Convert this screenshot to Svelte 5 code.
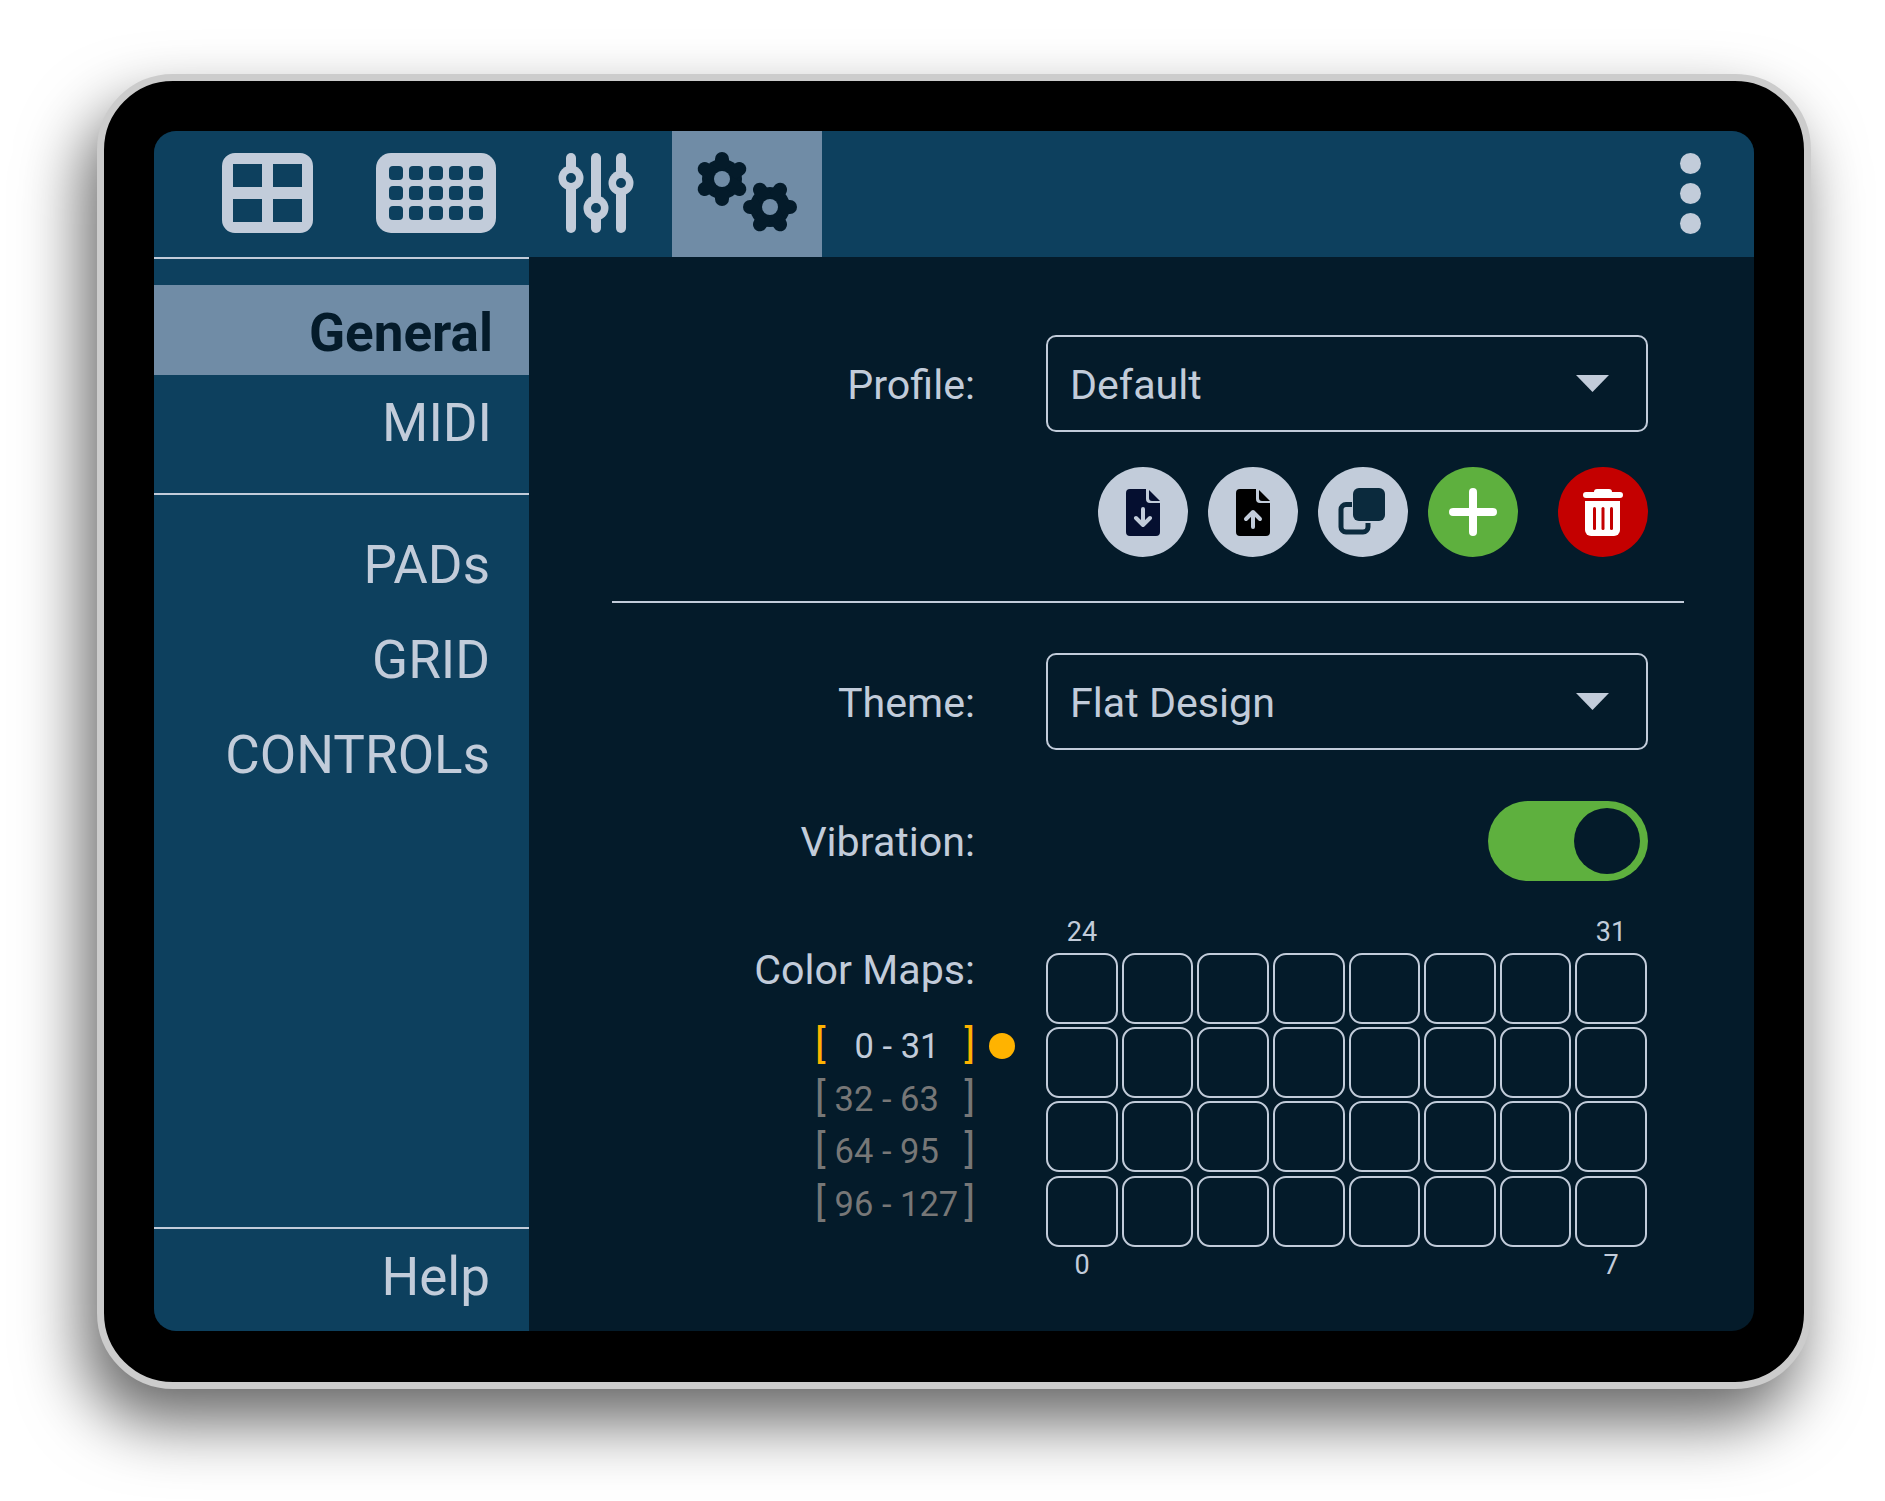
<script>
  const menuTop = ['PADs', 'GRID', 'CONTROLs'];
  const ranges = [
    { label: '0 - 31', active: true },
    { label: '32 - 63', active: false },
    { label: '64 - 95', active: false },
    { label: '96 - 127', active: false }
  ];
  const cells = Array.from({ length: 32 }, (_, i) => i);
  const holes = Array.from({ length: 15 }, (_, i) => ({ x: 13 + (i % 5) * 20, y: 13 + Math.floor(i / 5) * 20 }));
  const sliders = [
    { x: 13, y: 25 },
    { x: 38, y: 55 },
    { x: 63, y: 30 }
  ];
  const angles = [0, 60, 120];
</script>

<div class="page">
  <div class="device">
    <div class="screen">
      <header class="topbar">
        <button class="tab tab-grid" aria-label="Pads">
          <svg width="91" height="80" viewBox="0 0 91 80">
            <path fill-rule="evenodd" d="M13 0H78a13 13 0 0 1 13 13V67a13 13 0 0 1-13 13H13A13 13 0 0 1 0 67V13A13 13 0 0 1 13 0ZM11 11V34H40V11ZM51 11V34H80V11ZM11 46V69H40V46ZM51 46V69H80V46Z" />
          </svg>
        </button>
        <button class="tab tab-keys" aria-label="Grid">
          <svg width="120" height="80" viewBox="0 0 120 80">
            <rect width="120" height="80" rx="15" />
            {#each holes as h}
              <rect class="hole" x={h.x} y={h.y} width="14" height="14" rx="4" />
            {/each}
          </svg>
        </button>
        <button class="tab tab-sliders" aria-label="Controls">
          <svg width="76" height="80" viewBox="0 0 76 80">
            {#each sliders as s}
              <rect x={s.x - 5} y="0" width="10" height="80" rx="5" />
              <circle cx={s.x} cy={s.y} r="12.5" />
              <circle class="hole" cx={s.x} cy={s.y} r="5" />
            {/each}
          </svg>
        </button>
        <button class="tab tab-gears" aria-label="Settings">
          <svg width="104" height="84" viewBox="0 0 104 84">
            <g transform="translate(27 28)">
              <circle r="20" />
              {#each angles as a}
                <line x1="0" y1="-20" x2="0" y2="20" transform="rotate({a})" />
              {/each}
              <circle class="gear-hole" r="8" />
            </g>
            <g transform="translate(75 56)">
              <circle r="20" />
              {#each angles as a}
                <line x1="0" y1="-20" x2="0" y2="20" transform="rotate({a + 30})" />
              {/each}
              <circle class="gear-hole" r="8" />
            </g>
          </svg>
        </button>
        <div class="dots"><i></i><i></i><i></i></div>
      </header>

      <div class="body">
        <nav class="sidebar">
          <div class="side-item selected">General</div>
          <div class="side-item midi">MIDI</div>
          <div class="side-line"></div>
          {#each menuTop as item}
            <div class="side-item big">{item}</div>
          {/each}
          <div class="side-item help">Help</div>
        </nav>

        <main class="content">
          <div class="row first">
            <span class="label">Profile:</span>
            <div class="select">
              <span>Default</span>
              <svg width="33" height="17" viewBox="0 0 33 17"><path d="M0 0H33L16.5 17Z" /></svg>
            </div>
          </div>

          <div class="actions">
            <button class="round" aria-label="Import">
              <svg width="34" height="47" viewBox="0 0 34 47">
                <path class="doc-navy" d="M4 0H20V10a4 4 0 0 0 4 4H34V43a4 4 0 0 1-4 4H4a4 4 0 0 1-4-4V4a4 4 0 0 1 4-4Z" />
                <path class="doc-navy" d="M23 1L34 12H26a3 3 0 0 1-3-3Z" />
                <path class="arrow" d="M17 20V36M10 29L17 36L24 29" />
              </svg>
            </button>
            <button class="round" aria-label="Export">
              <svg width="34" height="47" viewBox="0 0 34 47">
                <path class="doc-black" d="M4 0H20V10a4 4 0 0 0 4 4H34V43a4 4 0 0 1-4 4H4a4 4 0 0 1-4-4V4a4 4 0 0 1 4-4Z" />
                <path class="doc-black" d="M23 1L34 12H26a3 3 0 0 1-3-3Z" />
                <path class="arrow" d="M17 38V23M10 30L17 23L24 30" />
              </svg>
            </button>
            <button class="round" aria-label="Copy">
              <svg width="50" height="50" viewBox="0 0 50 50">
                <rect class="copy-front" x="15" y="1" width="32" height="33" rx="6" />
                <path class="copy-back" d="M14 17.500H8a5 5 0 0 0-5 5V40a5 5 0 0 0 5 5H25a5 5 0 0 0 5-5V36" />
              </svg>
            </button>
            <button class="round green" aria-label="Add">
              <svg width="48" height="48" viewBox="0 0 48 48"><path class="plus" d="M24 4V44M4 24H44" /></svg>
            </button>
            <button class="round red" aria-label="Delete">
              <svg width="40" height="47" viewBox="0 0 40 47">
                <path d="M11 3a3 3 0 0 1 3-3H26a3 3 0 0 1 3 3H37a3 3 0 0 1 0 6H3a3 3 0 0 1 0-6Z" />
                <path d="M2 12H37V41a6 6 0 0 1-6 6H8a6 6 0 0 1-6-6Z" />
                <rect class="slit" x="10" y="18" width="3" height="23" rx="1.5" />
                <rect class="slit" x="18.500" y="18" width="3" height="23" rx="1.5" />
                <rect class="slit" x="27" y="18" width="3" height="23" rx="1.5" />
              </svg>
            </button>
          </div>

          <div class="divider"></div>

          <div class="row theme">
            <span class="label">Theme:</span>
            <div class="select">
              <span>Flat Design</span>
              <svg width="33" height="17" viewBox="0 0 33 17"><path d="M0 0H33L16.5 17Z" /></svg>
            </div>
          </div>

          <div class="row vibration">
            <span class="label">Vibration:</span>
            <div class="toggle"><i></i></div>
          </div>

          <div class="row maps">
            <div class="maps-left">
              <span class="label">Color Maps:</span>
              <ul class="ranges">
                {#each ranges as r}
                  <li class:active={r.active}>
                    <b>[</b>
                    <span class="nums">{r.label}</span>
                    <b>]</b>
                    {#if r.active}<em class="dot"></em>{/if}
                  </li>
                {/each}
              </ul>
            </div>
            <div class="maps-right">
              <div class="corner-labels top"><span>24</span><span>31</span></div>
              <div class="cells">
                {#each cells as c (c)}
                  <div class="cell"></div>
                {/each}
              </div>
              <div class="corner-labels"><span>0</span><span>7</span></div>
            </div>
          </div>
        </main>
      </div>
    </div>
  </div>
</div>

<style>
  :global(body) { background: #fff; font-family: 'Roboto', sans-serif; }

  .page { box-sizing: border-box; height: 1501px; padding: 74px 0 0 97px; overflow: hidden; background: #fff; }
  .device {
    box-sizing: border-box;
    width: 1714px;
    height: 1315px;
    padding: 50px;
    background: #000;
    border: 7px solid #ccc;
    border-radius: 76px;
    box-shadow: -13px 33px 65px rgba(0, 0, 0, 0.6);
  }
  .screen { width: 1600px; height: 1200px; border-radius: 22px; overflow: hidden; background: #041b2a; display: flex; flex-direction: column; color: #c2ccda; }

  /* barra de cima */
  .topbar { height: 126px; flex: none; background: #0d405e; display: flex; padding-left: 68px; }
  .tab { background: none; border: none; padding: 0 0 2px; display: flex; align-items: center; justify-content: center; }
  .tab svg { display: block; fill: #c2ccda; }
  .tab .hole { fill: #0d405e; }
  .tab-keys { margin-left: 63px; }
  .tab-sliders { margin-left: 62px; }
  .tab-gears { margin-left: 38px; width: 150px; background: #708ca6; }
  .tab-gears svg { fill: #041b2a; }
  .tab-gears line { stroke: #041b2a; stroke-width: 14; stroke-linecap: round; }
  .tab-gears .gear-hole { fill: #708ca6; }
  .dots { margin: 0 53px 2px auto; display: flex; flex-direction: column; justify-content: center; gap: 9px; }
  .dots i { display: block; width: 21px; height: 21px; border-radius: 50%; background: #c2ccda; }

  .body { flex: 1; display: flex; min-height: 0; }

  /* menu lateral */
  .sidebar { width: 375px; flex: none; background: #0d405e; border-top: 2px solid #c2ccda; display: flex; flex-direction: column; padding-top: 26px; box-sizing: border-box; }
  .side-item { text-align: right; font-size: 53px; }
  .selected { height: 90px; line-height: 96px; background: #708ca6; color: #041b2a; font-weight: 700; padding-right: 36px; }
  .midi { height: 90px; line-height: 96px; padding-right: 37px; }
  .side-line { height: 2px; background: #c2ccda; margin: 28px 0 23px; }
  .big { height: 95px; line-height: 95px; padding-right: 39px; }
  .help { margin-top: auto; height: 102px; line-height: 96px; border-top: 2px solid #c2ccda; padding-right: 39px; }

  /* conteudo */
  .content { flex: 1; padding: 0 70px 0 83px; }
  .row { display: grid; grid-template-columns: 363px 602px; column-gap: 71px; align-items: center; }
  .first { margin-top: 78px; }
  .label { display: block; text-align: right; font-size: 41.2px; padding-top: 2px; }
  .select { box-sizing: border-box; height: 97px; border: 2px solid #c2ccda; border-radius: 10px; display: flex; align-items: center; justify-content: space-between; padding: 2px 37px 0 22px; font-size: 41.2px; }
  .select svg { fill: #c2ccda; display: block; margin-top: -2px; }

  .actions { display: flex; justify-content: flex-end; gap: 20px; margin: 35px 36px 0 0; }
  .round { width: 90px; height: 90px; padding: 0; border: none; border-radius: 50%; background: #c2ccda; display: flex; align-items: center; justify-content: center; }
  .round svg { display: block; }
  .doc-navy { fill: #050f30; }
  .doc-black { fill: #000; }
  .arrow { fill: none; stroke: #c2ccda; stroke-width: 4; stroke-linecap: round; stroke-linejoin: round; }
  .copy-front { fill: #0b2a3d; }
  .copy-back { fill: none; stroke: #0b2a3d; stroke-width: 5; stroke-linecap: butt; }
  .green { background: #5eb03e; }
  .plus { fill: none; stroke: #fff; stroke-width: 8; stroke-linecap: round; }
  .red { background: #c40000; margin-left: 20px; }
  .red svg { fill: #fff; }
  .red .slit { fill: #c40000; }

  .divider { height: 2px; background: #c2ccda; margin-top: 44px; }

  .theme { margin-top: 50px; }
  .vibration { margin-top: 51px; }
  .toggle { justify-self: end; box-sizing: border-box; width: 160px; height: 80px; padding: 7px 8px; border-radius: 40px; background: #5eb03e; display: flex; justify-content: flex-end; }
  .toggle i { display: block; width: 66px; height: 66px; border-radius: 50%; background: #041b2a; }

  .maps { margin-top: 32px; align-items: start; }
  .maps-left { padding-top: 31px; }
  .ranges { list-style: none; margin: 26px 0 0; padding: 0; font-size: 34.5px; color: #777; }
  .ranges li { position: relative; width: 160px; height: 52.5px; line-height: 52.5px; margin-left: auto; display: flex; }
  .ranges b { font-weight: 400; font-size: 40px; line-height: 50px; }
  .ranges li b:last-of-type { margin-left: auto; }
  .nums { margin-left: 9px; }
  .active b { color: #ffb300; }
  .active .nums { color: #c2ccda; padding-left: 20px; }
  .dot { position: absolute; left: 174px; top: 13px; width: 26px; height: 26px; border-radius: 50%; background: #ffb300; }

  .maps-right { padding-right: 1px; }
  .corner-labels { display: flex; justify-content: space-between; font-size: 27px; height: 36px; line-height: 36px; }
  .corner-labels.top { padding: 1px 0 3px; }
  .corner-labels span { width: 72px; text-align: center; }
  .cells { display: grid; grid-template-columns: repeat(8, 1fr); grid-auto-rows: 71px; column-gap: 4px; row-gap: 3.2px; }
  .cell { border: 2px solid #c2ccda; border-radius: 13px; box-sizing: border-box; }
</style>
